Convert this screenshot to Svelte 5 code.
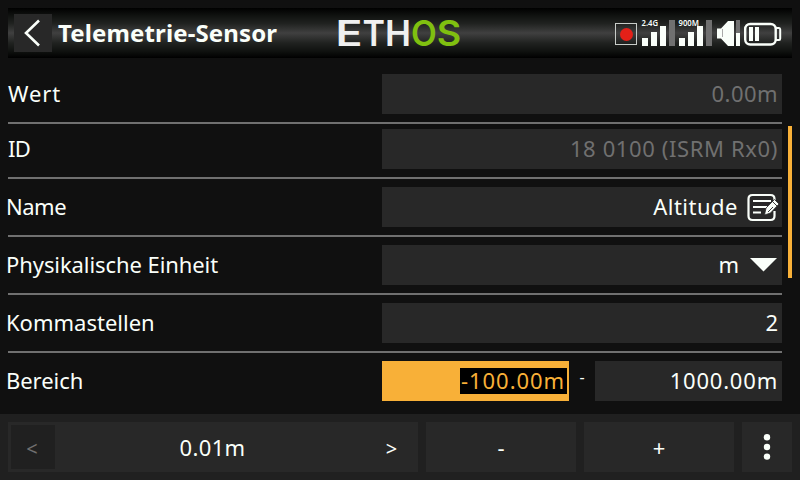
<script>
  const rows = [
    { label: 'Wert', value: '0.00m', kind: 'readonly', top: 8, bottom: 8, ls: 0.9, vs: 0.45 },
    { label: 'ID', value: '18 0100 (ISRM Rx0)', kind: 'readonly', top: 5, bottom: 8, ls: -0.6, vs: 0.62 },
    { label: 'Name', value: 'Altitude', kind: 'edit', top: 8, bottom: 8, ls: -0.5, vs: 0.5 },
    { label: 'Physikalische Einheit', value: 'm', kind: 'select', top: 8, bottom: 8, ls: -0.08, vs: 0 },
    { label: 'Kommastellen', value: '2', kind: 'number', top: 8, bottom: 8, ls: 0, vs: 0 },
    { label: 'Bereich', value: '', kind: 'range', top: 8, bottom: 8, ls: -0.05, vs: 0.8 }
  ];
</script>

<div class="screen">
  <header>
    <button class="back" aria-label="Zurück">
      <svg width="38" height="38" viewBox="0 0 38 38"><path d="M25 6.5 12 19l13 12.5" fill="none" stroke="#fafffa" stroke-width="2.6" /></svg>
    </button>
    <h1>Telemetrie-Sensor</h1>
    <svg class="logo" width="126" height="50" viewBox="0 0 126 50">
      <g class="wordmark">
        <g fill="#f0f0f0">
          <text x="-1.500" y="37.6" textLength="27" lengthAdjust="spacingAndGlyphs">E</text>
          <text x="25.500" y="37.6" textLength="22.500" lengthAdjust="spacingAndGlyphs">T</text>
          <text x="48" y="37.6" textLength="26" lengthAdjust="spacingAndGlyphs">H</text>
        </g>
        <g fill="#80c010">
          <text x="74" y="37.6" textLength="25.800" lengthAdjust="spacingAndGlyphs">O</text>
          <text x="99.800" y="37.6" textLength="24.500" lengthAdjust="spacingAndGlyphs">S</text>
        </g>
      </g>
    </svg>
    <svg class="status" width="178" height="50" viewBox="614 8 178 50">
      <rect x="615.5" y="23.5" width="21" height="21" fill="none" stroke="#c8ccc8" />
      <circle cx="626.5" cy="34.5" r="6.5" fill="#e42018" />
      <path d="M669 20h6v26h-6zM706 20h6v26h-6zM736 20h4v13h-4z" fill="#707070" />
      <g fill="#fafffa">
        <path d="M642 38h6v8h-6zM651 32h6v14h-6zM660 26h6v20h-6zM679 38h6v8h-6zM688 32h6v14h-6zM697 26h6v20h-6z" />
        <path d="M717 28.500h4l7-7.500h6v25h-6l-7-7.500h-4zM736 33h4v13h-4z" />
        <path d="M749 27h4v14h-4zM755 27h4v14h-4z" />
      </g>
      <path d="M722.500 29v8" stroke="#aaa" />
      <rect x="745.200" y="24" width="30.500" height="20.500" rx="5" fill="none" stroke="#fafffa" stroke-width="2.4" />
      <path d="M776 28h3q1.200 0 1.200 1.500v9q0 1.500-1.200 1.500H776" fill="none" stroke="#fafffa" stroke-width="2" />
      <g fill="#fafffa" font-family="Noto Sans" font-size="8" font-weight="600">
        <text x="641.500" y="26" textLength="16.500" lengthAdjust="spacingAndGlyphs">2.4G</text>
        <text x="678.500" y="26" textLength="20.500" lengthAdjust="spacingAndGlyphs">900M</text>
      </g>
    </svg>
  </header>

  <main>
    {#each rows as row}
      <div class="row" style="padding-top:{row.top}px;padding-bottom:{row.bottom}px">
        <span class="label {row.kind === 'readonly' ? 'fixed' : ''}" style="letter-spacing:{row.ls}px">{row.label}</span>
        {#if row.kind === 'range'}
          <div class="range">
            <div class="field half active"><span class="selected">-100.00m</span></div>
            <span class="dash">-</span>
            <div class="field half"><span class="value" style="letter-spacing:{row.vs}px">1000.00m</span></div>
          </div>
        {:else}
          <div class="field {row.kind}">
            <span class="value" style="letter-spacing:{row.vs}px">{row.value}</span>
            {#if row.kind === 'edit'}
              <svg width="32" height="30" viewBox="0 0 32 30">
                <path d="M27.5 8V7q0-4-4-4H5.500q-4 0-4 4v17q0 4 4 4h18q4 0 4-4V19" fill="none" stroke="#fafffa" stroke-width="2.200" />
                <path d="M6 9h18M6 15h14M6 20.500h8" stroke="#fafffa" stroke-width="2.200" />
                <path d="M17.500 23l1.500-7L27.500 7.500l4.500 4.500-8.500 9z" fill="#fafffa" stroke="#282828" stroke-width=".8" />
                <path d="M25.500 9.500l4.500 4.500M21 20l5-5" stroke="#282828" stroke-width=".9" />
              </svg>
            {:else if row.kind === 'select'}
              <svg width="27" height="14" viewBox="0 0 27 14"><path d="M0 0h27L13.500 13.500z" fill="#fafffa" /></svg>
            {/if}
          </div>
        {/if}
      </div>
    {/each}
  </main>
  <div class="scrollbar"></div>

  <footer>
    <div class="stepper">
      <button class="prev">&lt;</button>
      <span class="step">0.01m</span>
      <button class="next">&gt;</button>
    </div>
    <button class="wide">-</button>
    <button class="wide">+</button>
    <button class="more" aria-label="Mehr">
      <svg width="8" height="28" viewBox="0 0 8 28" fill="#fafffa"><circle cx="4" cy="4.300" r="3.200" /><circle cx="4" cy="14" r="3.200" /><circle cx="4" cy="23.600" r="3.200" /></svg>
    </button>
  </footer>
</div>

<style>
  .screen { position: relative; width: 800px; height: 480px; overflow: hidden; display: flex; flex-direction: column; background: #101010; color: #fafffa; font: 22px/40px "Noto Sans", sans-serif; box-sizing: border-box; padding-top: 8px; }
  svg { display: block; flex: none; }
  button { border: 0; padding: 0; margin: 0; color: inherit; font: inherit; background: #282828; display: flex; align-items: center; justify-content: center; }
  header { height: 50px; flex: none; margin: 0 8px 8px; display: flex; align-items: center; background: linear-gradient(#000 0, #101210 15%, #202220 31%, #404040 50%, #202220 70%, #101210 86%, #000 100%); }
  .back { width: 38px; height: 38px; margin-left: 6px; }
  h1 { width: 274px; margin: 0 0 0 6px; font-size: 24px; line-height: 50px; font-weight: 700; letter-spacing: .13px; white-space: nowrap; }
  .logo { margin-left: 5px; }
  .wordmark { font: 600 35px/1 "Inter", sans-serif; }
  .status { margin-left: auto; }
  main { height: 348px; flex: none; overflow: hidden; padding: 0 18px 0 8px; }
  .row { display: flex; justify-content: space-between; }
  .row:not(:last-child) { border-bottom: 2px solid #707070; }
  .label { height: 40px; margin-left: -2px; line-height: 38px; white-space: nowrap; }
  .label.fixed { margin-left: 0; }
  .value { line-height: 38px; padding-bottom: 2px; }
  .field { width: 400px; height: 40px; box-sizing: border-box; padding-right: 4px; background: #282828; display: flex; align-items: center; justify-content: flex-end; white-space: nowrap; }
  .readonly { color: #707070; }
  .edit { gap: 9px; padding-right: 3px; }
  .select { gap: 11px; padding-right: 5px; }
  .range { width: 400px; display: flex; justify-content: space-between; }
  .half { width: 187px; }
  .active { background: #f8b038; padding-right: 2px; }
  .selected { box-sizing: border-box; height: 26px; line-height: 24px; background: #000; color: #f8b038; padding: 0 2px 0 1px; width: 107px; letter-spacing: .95px; }
  .dash { font-size: 16px; line-height: 32px; }
  .scrollbar { position: absolute; left: 788px; top: 126px; width: 4px; height: 152px; background: #f8b038; }
  footer { height: 66px; flex: none; box-sizing: border-box; padding: 8px; display: flex; gap: 8px; background: #202020; }
  .stepper { width: 410px; background: #282828; display: flex; align-items: center; }
  .prev { width: 44px; height: 44px; box-sizing: border-box; margin-left: 3px; padding: 3px 2px 0 0; background: #202020; color: #707070; font-size: 20px; }
  .step { flex: 1; text-align: center; padding-left: 5px; letter-spacing: .35px; }
  .next { width: 53px; height: 50px; box-sizing: border-box; padding-top: 3px; font-size: 20px; }
  .wide { width: 150px; }
  .more { width: 50px; }
</style>
